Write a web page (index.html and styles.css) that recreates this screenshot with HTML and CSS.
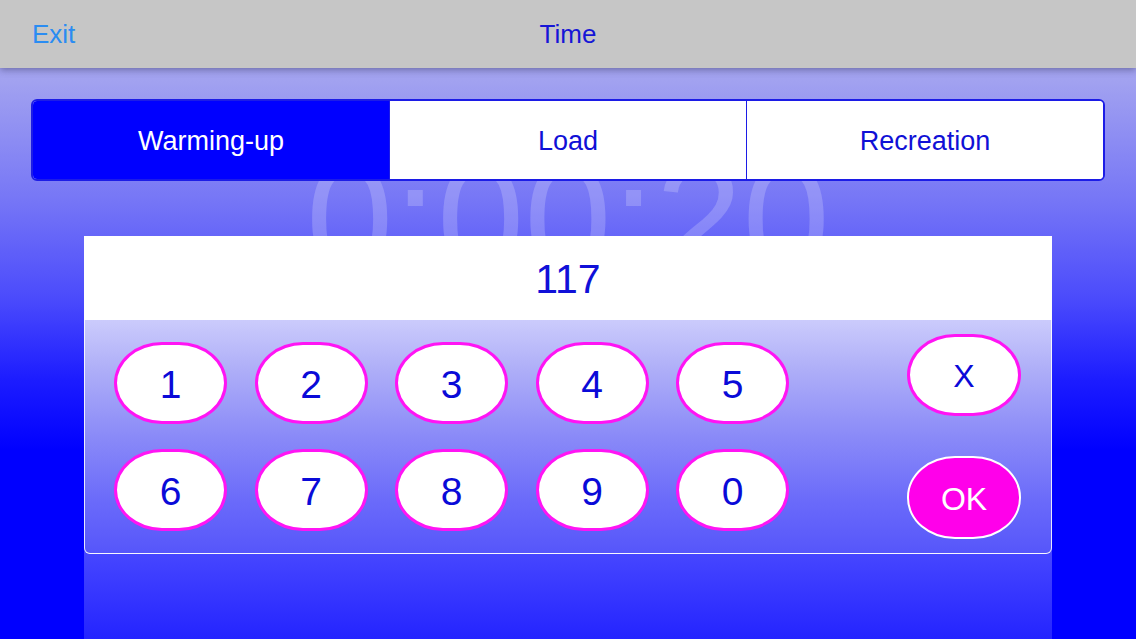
FILE: index.html
```html
<!DOCTYPE html>
<html>
<head>
<meta charset="utf-8">
<title>Time</title>
<link rel="stylesheet" href="styles.css">
</head>
<body>
<div class="screen">
  <header class="header">
    <span class="exit">Exit</span>
    <span class="title">Time</span>
    <span></span>
  </header>
  <div class="clock" aria-hidden="true">0:00:20</div>
  <main class="main">
    <div class="segmented">
      <div class="seg active">Warming-up</div>
      <div class="seg">Load</div>
      <div class="seg">Recreation</div>
    </div>
    <section class="sheet">
      <div class="panel">
        <div class="display">117</div>
        <div class="keypad">
          <div class="digits">
            <div class="key">1</div>
            <div class="key">2</div>
            <div class="key">3</div>
            <div class="key">4</div>
            <div class="key">5</div>
            <div class="key">6</div>
            <div class="key">7</div>
            <div class="key">8</div>
            <div class="key">9</div>
            <div class="key">0</div>
          </div>
          <div class="actions">
            <div class="key key-small">X</div>
            <div class="key key-small key-ok">OK</div>
          </div>
        </div>
      </div>
    </section>
  </main>
</div>
</body>
</html>
```

FILE: styles.css
```css
* { box-sizing: border-box; }
html, body { margin: 0; padding: 0; }
body {
  width: 1136px;
  height: 639px;
  overflow: hidden;
  font-family: "Liberation Sans", Arial, sans-serif;
}
.screen {
  position: relative;
  width: 1136px;
  height: 639px;
  background: linear-gradient(to bottom, #aaaaee 0px, #a2a2f0 80px, #7676f6 200px, #4a4afc 300px, #1c1cff 380px, #0000ff 450px, #0000ff 639px);
  overflow: hidden;
}
.header {
  position: relative;
  z-index: 3;
  height: 68px;
  background: #c6c6c6;
  box-shadow: 0 2px 7px rgba(40, 40, 80, 0.45);
  display: grid;
  grid-template-columns: 1fr auto 1fr;
  align-items: center;
  padding: 0 32px;
  font-size: 26px;
}
.exit { color: #2a8cf2; }
.title { color: #1616d6; }
.clock {
  position: absolute;
  z-index: 0;
  left: 0;
  right: 0;
  top: 140px;
  text-align: center;
  font-size: 157px;
  line-height: 1;
  color: rgba(255, 255, 255, 0.2);
}
.main {
  position: relative;
  z-index: 1;
  padding: 31px 31px 0 31px;
}
.segmented {
  display: flex;
  height: 82px;
  border: 2px solid #1c1ce6;
  border-radius: 6px;
  overflow: hidden;
  background: #ffffff;
}
.seg {
  flex: 1;
  display: flex;
  align-items: center;
  justify-content: center;
  padding-top: 2px;
  font-size: 27px;
  color: #1010d6;
  background: #ffffff;
}
.seg + .seg { border-left: 1.5px solid #1c1ce6; }
.seg.active {
  background: #0000ff;
  color: #ffffff;
}
.sheet {
  margin: 55px 53px 0 53px;
  height: 403px;
  background: linear-gradient(to bottom, #6262fa 0px, #4646ff 318px, #2424ff 403px);
}
.panel {
  height: 318px;
  display: flex;
  flex-direction: column;
}
.display {
  height: 84px;
  background: #ffffff;
  display: flex;
  align-items: center;
  justify-content: center;
  padding-top: 2px;
  font-size: 41px;
  color: #1010d8;
}
.keypad {
  flex: 1;
  display: flex;
  justify-content: space-between;
  padding: 0 30px 0 29px;
  background: linear-gradient(to bottom, #cbcbfc 0%, #b0b0f8 20%, #8a8af8 50%, #6a6afa 78%, #5656fa 100%);
  border: 1.5px solid rgba(255, 255, 255, 0.85);
  border-top: none;
  border-radius: 0 0 6px 6px;
}
.digits {
  display: grid;
  grid-template-columns: repeat(5, 113px);
  grid-auto-rows: 82px;
  column-gap: 27.5px;
  row-gap: 25px;
  padding-top: 22px;
}
.actions {
  display: flex;
  flex-direction: column;
  gap: 40px;
  padding-top: 14px;
}
.key {
  width: 113px;
  height: 82px;
  border: 3px solid #ff14f4;
  border-radius: 48px / 41px;
  background: #ffffff;
  color: #0a0ad8;
  font-size: 39px;
  padding-top: 3px;
  display: flex;
  align-items: center;
  justify-content: center;
}
.key-small {
  width: 114px;
  font-size: 32px;
}
.key-ok {
  height: 83px;
  background: #ff00ea;
  border: 2.5px solid #ffffff;
  color: #ffffff;
}
```
